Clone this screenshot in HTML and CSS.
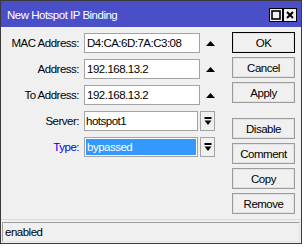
FILE: index.html
```html
<!DOCTYPE html>
<html lang="en">

<head>
    <meta charset="UTF-8">
    <meta name="viewport" content="width=device-width, initial-scale=1.0">
    <title>New Hotspot IP Binding</title>
    <link rel="stylesheet" href="styles.css">
</head>

<body>
    <div class="window">
        <div class="titlebar">
            <span class="title">New Hotspot IP Binding</span>
            <div class="title-buttons">
                <span class="tbtn">
                    <svg width="10" height="10" viewBox="0 0 10 10"><rect x="1" y="1" width="8" height="8" fill="none" stroke="#000" stroke-width="1.6"/></svg>
                </span>
                <span class="tbtn">
                    <svg width="10" height="10" viewBox="0 0 10 10"><path d="M2 2 L8 8 M8 2 L2 8" stroke="#000" stroke-width="2"/></svg>
                </span>
            </div>
        </div>

        <div class="content">
            <div class="form">
                <div class="row">
                    <label class="label">MAC Address:</label>
                    <div class="field">D4:CA:6D:7A:C3:08</div>
                    <svg class="up" width="9" height="5" viewBox="0 0 9 5"><polygon points="0,5 4.5,0 9,5" fill="#000"/></svg>
                </div>
                <div class="row">
                    <label class="label">Address:</label>
                    <div class="field">192.168.13.2</div>
                    <svg class="up" width="9" height="5" viewBox="0 0 9 5"><polygon points="0,5 4.5,0 9,5" fill="#000"/></svg>
                </div>
                <div class="row">
                    <label class="label">To Address:</label>
                    <div class="field">192.168.13.2</div>
                    <svg class="up" width="9" height="5" viewBox="0 0 9 5"><polygon points="0,5 4.5,0 9,5" fill="#000"/></svg>
                </div>
                <div class="row">
                    <label class="label">Server:</label>
                    <div class="field short">hotspot1</div>
                    <span class="drop">
                        <svg width="8" height="8" viewBox="0 0 8 8"><rect x="0.5" y="0" width="7" height="2" fill="#000"/><polygon points="0.5,3.5 7.5,3.5 4,8" fill="#000"/></svg>
                    </span>
                </div>
                <div class="row">
                    <label class="label active">Type:</label>
                    <div class="field short"><span class="selected">bypassed</span></div>
                    <span class="drop">
                        <svg width="8" height="8" viewBox="0 0 8 8"><rect x="0.5" y="0" width="7" height="2" fill="#000"/><polygon points="0.5,3.5 7.5,3.5 4,8" fill="#000"/></svg>
                    </span>
                </div>
            </div>

            <div class="buttons">
                <button class="btn default">OK</button>
                <button class="btn">Cancel</button>
                <button class="btn">Apply</button>
                <button class="btn spaced">Disable</button>
                <button class="btn">Comment</button>
                <button class="btn">Copy</button>
                <button class="btn">Remove</button>
            </div>
        </div>

        <div class="status">
            <div class="status-box">enabled</div>
        </div>
    </div>
</body>

</html>
```

FILE: styles.css
```css
body {
    margin: 0;
    background-color: #fff;
    font-family: "Liberation Sans", Arial, sans-serif;
    font-size: 11.5px;
    letter-spacing: -0.5px;
    color: #000;
}

.window {
    width: 302px;
    height: 244px;
    box-sizing: border-box;
    border: 1px solid #3a3a3a;
    background-color: #f0f0f0;
    display: flex;
    flex-direction: column;
}

/* title bar */
.titlebar {
    height: 26px;
    background-color: #4b4fc7;
    display: flex;
    align-items: center;
    padding: 2px 4px 0 6px;
    box-sizing: border-box;
}

.title {
    color: #fff;
    font-size: 11.5px;
}

.title-buttons {
    margin-left: auto;
    display: flex;
}

.tbtn {
    width: 14px;
    height: 14px;
    box-sizing: border-box;
    border: 1px solid #000;
    background-color: #f0f0f0;
    display: flex;
    align-items: center;
    justify-content: center;
}

/* form */
.content {
    flex: 1;
    display: flex;
    padding: 5px 6px 0 1px;
}

.form {
    padding-top: 1px;
}

.row {
    display: flex;
    align-items: center;
    height: 20px;
    margin-bottom: 6px;
}

.label {
    width: 77px;
    text-align: right;
    margin-right: 5px;
}

.label.active {
    color: #0000ee;
}

.field {
    width: 116px;
    height: 20px;
    box-sizing: border-box;
    border: 1px solid #a3a3a3;
    background-color: #fff;
    padding: 0 2px;
    line-height: 18px;
    white-space: nowrap;
}

.field.short {
    width: 114px;
    padding: 1px;
    line-height: 16px;
}

.selected {
    display: block;
    height: 16px;
    background-color: #3399ff;
    color: #fff;
    padding-left: 1px;
}

.up {
    margin-left: 6px;
}

.drop {
    width: 15px;
    height: 20px;
    box-sizing: border-box;
    margin-left: 2px;
    border: 1px solid #a3a3a3;
    background-color: #f0f0f0;
    display: flex;
    align-items: center;
    justify-content: center;
}

/* buttons */
.buttons {
    margin-left: auto;
    display: flex;
    flex-direction: column;
}

.btn {
    width: 63px;
    height: 21px;
    margin-bottom: 4px;
    padding: 0;
    font-family: "Liberation Sans", Arial, sans-serif;
    font-size: 11.5px;
    letter-spacing: -0.5px;
    color: #000;
    background-color: #f0f0f0;
    border: 1px solid #9c9c9c;
    box-shadow: inset 0 0 0 1px #e2e2e2;
}

.btn.default {
    border-color: #000;
}

.btn.spaced {
    margin-top: 11px;
}

/* status bar */
.status {
    border-top: 1px solid #dadada;
    padding: 2px 1px 1px 1px;
}

.status-box {
    height: 20px;
    box-sizing: border-box;
    border: 1px solid #a0a0a0;
    border-right-color: #e4e4e4;
    border-bottom-color: #e4e4e4;
    padding-left: 2px;
    line-height: 18px;
}
```
